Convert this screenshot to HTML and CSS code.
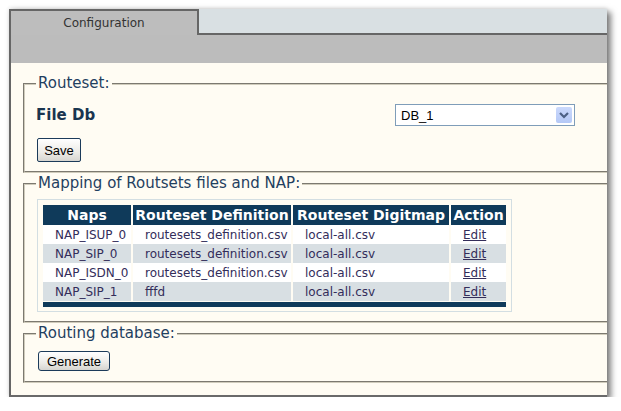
FILE: index.html
```html
<!DOCTYPE html>
<html>
<head>
<meta charset="utf-8">
<link rel="stylesheet" href="styles.css">
</head>
<body>
<div class="window">
  <div class="tabs">
    <div class="tab">Configuration</div>
    <div class="tab-rest"></div>
  </div>
  <div class="bar"></div>
  <div class="content">
    <fieldset class="box box-routeset">
      <legend>Routeset:</legend>
      <div class="file-row">
        <div class="file-label">File Db</div>
        <div class="select">
          <span class="select-text">DB_1</span>
          <span class="select-arrow">
            <svg width="16" height="16" viewBox="0 0 16 16"><path d="M4 6 L8 10 L12 6" fill="none" stroke="#4d6185" stroke-width="2.2"/></svg>
          </span>
        </div>
      </div>
      <button class="btn btn-save">Save</button>
    </fieldset>
    <fieldset class="box box-mapping">
      <legend>Mapping of Routsets files and NAP:</legend>
      <div class="table-wrap">
        <table class="grid">
          <thead>
            <tr>
              <th class="c1">Naps</th>
              <th class="c2">Routeset Definition</th>
              <th class="c3">Routeset Digitmap</th>
              <th class="c4">Action</th>
            </tr>
          </thead>
          <tbody>
            <tr class="odd"><td>NAP_ISUP_0</td><td>routesets_definition.csv</td><td>local-all.csv</td><td><a href="#">Edit</a></td></tr>
            <tr class="even"><td>NAP_SIP_0</td><td>routesets_definition.csv</td><td>local-all.csv</td><td><a href="#">Edit</a></td></tr>
            <tr class="odd"><td>NAP_ISDN_0</td><td>routesets_definition.csv</td><td>local-all.csv</td><td><a href="#">Edit</a></td></tr>
            <tr class="even"><td>NAP_SIP_1</td><td>fffd</td><td>local-all.csv</td><td><a href="#">Edit</a></td></tr>
          </tbody>
          <tfoot>
            <tr><td colspan="4" class="foot"></td></tr>
          </tfoot>
        </table>
      </div>
    </fieldset>
    <fieldset class="box box-db">
      <legend>Routing database:</legend>
      <button class="btn btn-gen">Generate</button>
    </fieldset>
  </div>
</div>
</body>
</html>
```

FILE: styles.css
```css
html, body {
  margin: 0;
  padding: 0;
  background: #ffffff;
}
body {
  padding: 9px 0 0 9px;
  font-family: "DejaVu Sans", Verdana, sans-serif;
}
.window {
  width: 596px;
  height: 386px;
  border-left: 2px solid #666666;
  border-bottom: 2px solid #6a6a6a;
  box-shadow: 4px 3px 6px rgba(0,0,0,0.5), 0 -1px 4px rgba(0,0,0,0.12);
  display: flex;
  flex-direction: column;
  overflow: hidden;
  background: #fffcf3;
}
.tabs {
  display: flex;
  height: 26px;
  flex: none;
}
.tab {
  width: 186px;
  background: #bdbdbd;
  border-top: 2px solid #666666;
  border-right: 2px solid #666666;
  font-size: 12px;
  color: #333333;
  text-align: center;
  line-height: 24px;
}
.tab-rest {
  flex: 1;
  background: #d9e0e3;
  border-bottom: 2px solid #666666;
}
.bar {
  height: 28px;
  background: #bcbcbc;
  flex: none;
}
.content {
  flex: 1;
  background: #fffcf3;
  padding-top: 12px;
}
.box {
  margin: 0 -10px 2px 12px;
  padding: 0 11px;
  border: 2px groove #d0ccbc;
  min-width: 0;
}
.box legend {
  padding: 0 2px;
  font-size: 15px;
  color: #1f4060;
  line-height: 17px;
}
.box-routeset {
  padding-top: 12px;
  padding-bottom: 9px;
}
.file-row {
  display: grid;
  grid-template-columns: 359px 180px;
  align-items: center;
}
.file-label {
  font-weight: bold;
  font-size: 15px;
  color: #1a3550;
}
.select {
  height: 22px;
  box-sizing: border-box;
  border: 1px solid #7f9db9;
  background: #ffffff;
  display: flex;
  align-items: center;
  justify-content: space-between;
  padding: 0 2px 0 5px;
}
.select-text {
  font-family: "Liberation Sans", Arial, sans-serif;
  font-size: 13px;
  color: #000000;
}
.select-arrow {
  width: 16px;
  height: 16px;
  border-radius: 2px;
  background: linear-gradient(#cbd9fc, #b4c8f6);
  display: flex;
}
.btn {
  font-family: "Liberation Sans", Arial, sans-serif;
  font-size: 13px;
  color: #000000;
  background: linear-gradient(#ffffff, #ecebe6 60%, #d6d5d0);
  border: 1px solid #1c3b5a;
  border-radius: 3px;
  padding: 0;
  display: block;
}
.btn-save {
  width: 44px;
  height: 24px;
  margin-top: 12px;
  margin-left: 1px;
  border-radius: 2px;
}
.box-mapping {
  padding-top: 7px;
  padding-bottom: 9px;
}
.table-wrap {
  width: 475px;
  box-sizing: border-box;
  border: 1px solid #d3dee2;
  padding: 5px 3px 4px 3px;
  margin-left: 1px;
}
.grid {
  width: 467px;
  border-collapse: separate;
  border-spacing: 2px 0;
  table-layout: fixed;
}
.grid th {
  background: #0f3a5a;
  color: #ffffff;
  font-weight: bold;
  font-size: 14px;
  height: 20px;
  padding: 0;
  text-align: center;
  white-space: nowrap;
  overflow: hidden;
}
.c1 { width: 88px; }
.c2 { width: 158px; }
.c3 { width: 156px; }
.c4 { width: 55px; }
.grid td {
  font-size: 12px;
  color: #332d5a;
  height: 19px;
  padding: 0 0 0 12px;
  white-space: nowrap;
  overflow: hidden;
}
.grid tr.odd td { background: #ffffff; }
.grid tr.even td { background: #d8dfe3; }
.grid a {
  color: #332d5a;
  text-decoration: underline;
}
.grid td.foot {
  height: 6px;
  padding: 0;
  border-top: 1px solid #fffcf3;
  background: #0f3a5a;
  background-clip: content-box;
  box-sizing: border-box;
}
.box-db {
  padding-top: 9px;
  padding-bottom: 10px;
}
.btn-gen {
  width: 72px;
  height: 20px;
  margin-left: 2px;
}
```
